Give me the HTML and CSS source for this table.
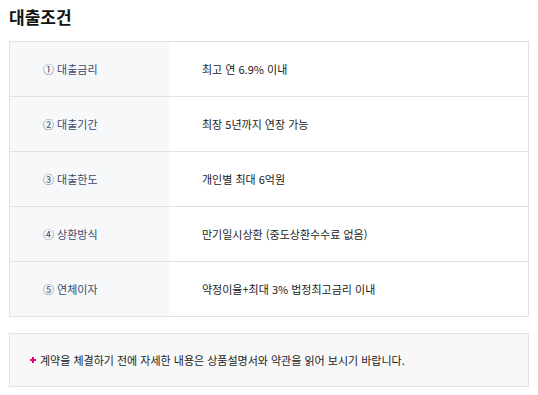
FILE: index.html
```html
<!DOCTYPE html>
<html lang="ko">
<head>
<meta charset="utf-8">
<link rel="stylesheet" href="styles.css">
</head>
<body>
<h2 class="title">대출조건</h2>
<div class="table">
  <div class="row"><div class="th">① 대출금리</div><div class="td">최고 연 6.9% 이내</div></div>
  <div class="row"><div class="th">② 대출기간</div><div class="td">최장 5년까지 연장 가능</div></div>
  <div class="row"><div class="th">③ 대출한도</div><div class="td">개인별 최대 6억원</div></div>
  <div class="row"><div class="th">④ 상환방식</div><div class="td">만기일시상환 (중도상환수수료 없음)</div></div>
  <div class="row"><div class="th">⑤ 연체이자</div><div class="td">약정이율+최대 3% 법정최고금리 이내</div></div>
</div>
<div class="notice"><span class="plus"></span>계약을 체결하기 전에 자세한 내용은 상품설명서와 약관을 읽어 보시기 바랍니다.</div>
</body>
</html>
```
FILE: styles.css
```css
body {
  margin: 0;
  padding: 0 9px 0 9px;
  font-family: "Noto Sans CJK KR", "Noto Sans", sans-serif;
  color: #222;
  background: #fff;
}
.title {
  margin: 0;
  padding-top: 5px;
  height: 36px;
  font-size: 17px;
  font-weight: 700;
  line-height: 24px;
  color: #111;
}
.table {
  border: 1px solid #e1e1e1;
}
.row {
  display: flex;
  height: 54px;
  border-top: 1px solid #e1e1e1;
}
.row:first-child { border-top: 0; }
.th {
  width: 126px;
  padding-left: 33px;
  background: #f7f8fa;
  color: #3b4a6e;
  font-size: 11px;
  display: flex;
  align-items: center;
}
.td {
  flex: 1;
  padding-left: 33px;
  font-size: 11px;
  color: #222;
  display: flex;
  align-items: center;
}
.notice {
  margin-top: 16px;
  height: 52px;
  border: 1px solid #e1e1e1;
  background: #f8f8f8;
  font-size: 11px;
  display: flex;
  align-items: center;
  padding-left: 20px;
  color: #222;
}
.plus {
  width: 6px;
  height: 6px;
  margin-right: 4px;
  background:
    linear-gradient(#e4007f, #e4007f) center / 6px 2px no-repeat,
    linear-gradient(#e4007f, #e4007f) center / 2px 6px no-repeat;
}
```
